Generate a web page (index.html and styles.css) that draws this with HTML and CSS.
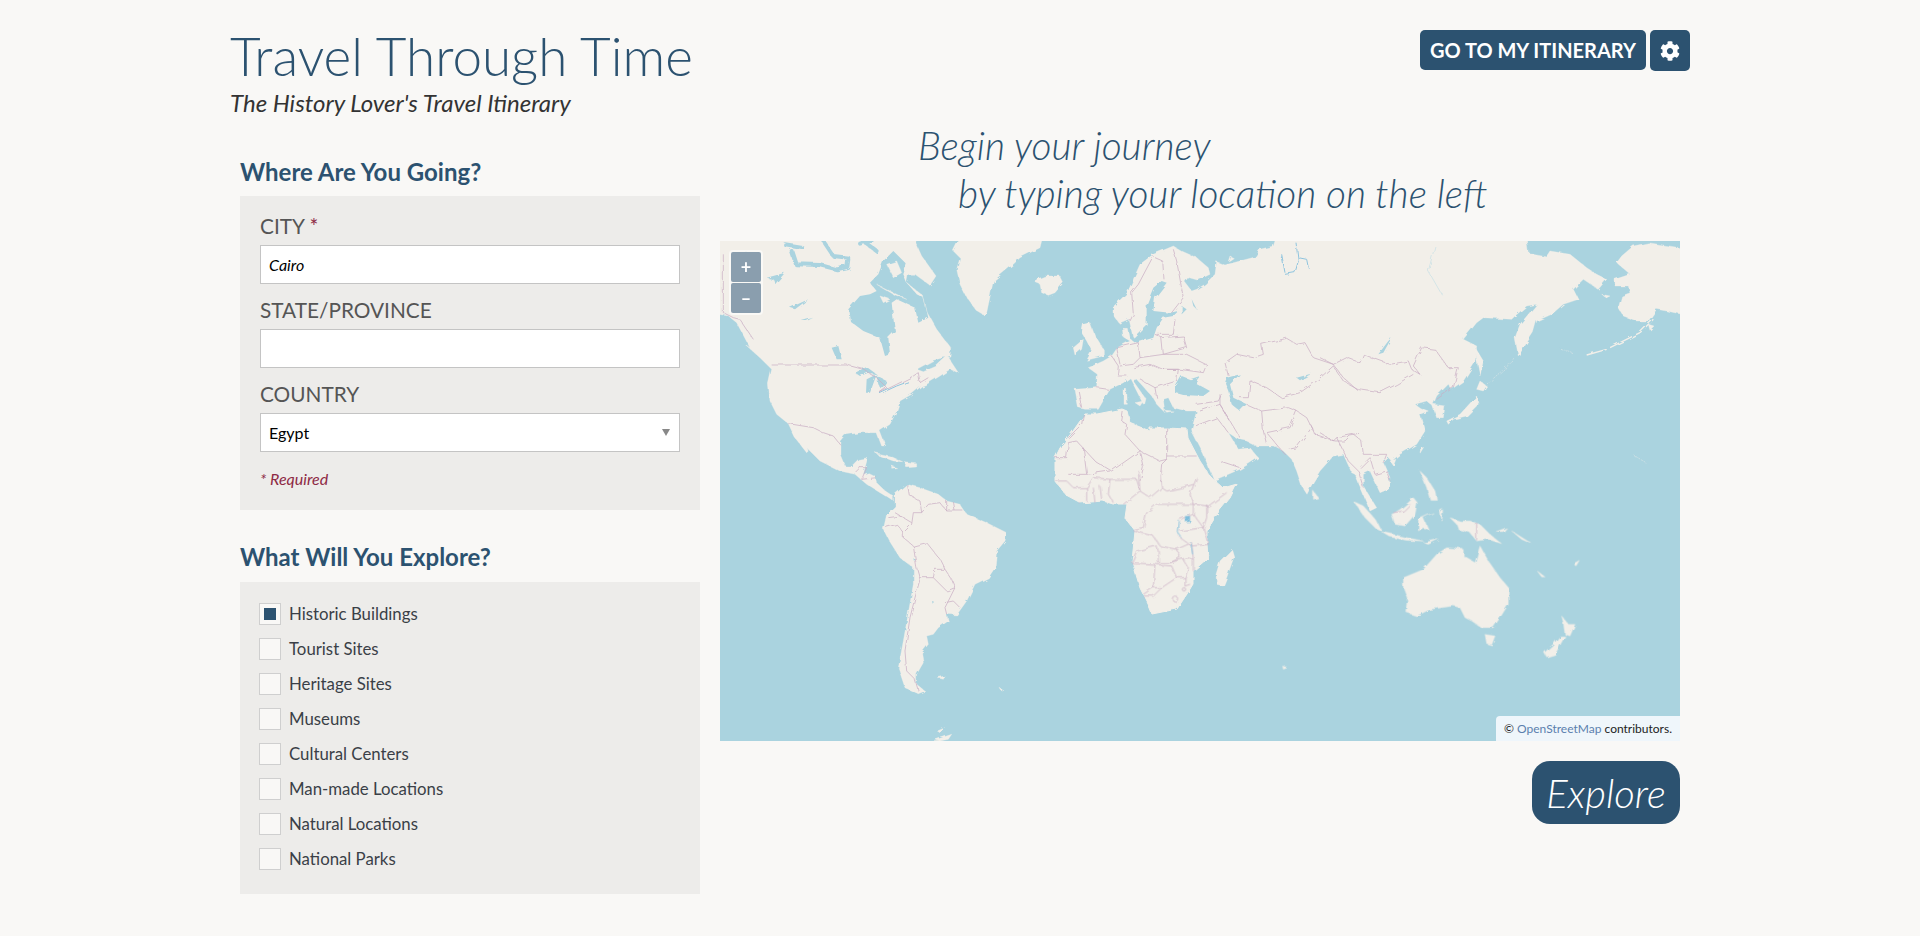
FILE: index.html
```html
<!DOCTYPE html>
<html lang="en">
<head>
  <meta charset="UTF-8" />
  <meta name="viewport" content="width=device-width, initial-scale=1.0"/>
  <title>Travel Through Time</title>
  <link rel="stylesheet" href="styles.css">
</head>
<body>
  <div class="page">
    <header class="top">
      <div>
        <h1 class="title">Travel Through Time</h1>
        <p class="tagline">The History Lover's Travel Itinerary</p>
      </div>
      <div class="top-buttons">
        <button class="btn">GO TO MY ITINERARY</button>
        <button class="btn btn-icon" aria-label="Settings">
          <svg viewBox="0 0 512 512" width="20" height="20"><path fill="#fff" d="M487.4 315.7l-42.6-24.6c4.3-23.2 4.3-47 0-70.2l42.6-24.6c4.9-2.8 7.1-8.6 5.5-14-11.1-35.6-30-67.8-54.7-94.6-3.8-4.1-10-5.1-14.8-2.3L380.8 110c-17.9-15.4-38.5-27.3-60.8-35.1V25.8c0-5.6-3.9-10.5-9.4-11.7-36.7-8.2-74.3-7.8-109.2 0-5.5 1.2-9.4 6.1-9.4 11.7V75c-22.2 7.9-42.8 19.8-60.8 35.1L88.7 85.5c-4.9-2.8-11-1.9-14.8 2.3-24.7 26.7-43.6 58.9-54.7 94.6-1.7 5.4.6 11.2 5.5 14L67.3 221c-4.3 23.2-4.3 47 0 70.2l-42.6 24.6c-4.9 2.8-7.1 8.6-5.5 14 11.1 35.6 30 67.8 54.7 94.6 3.8 4.1 10 5.1 14.8 2.3l42.6-24.6c17.9 15.4 38.5 27.3 60.8 35.1v49.2c0 5.6 3.9 10.5 9.4 11.7 36.7 8.2 74.3 7.8 109.2 0 5.5-1.2 9.4-6.1 9.4-11.7v-49.2c22.2-7.9 42.8-19.8 60.8-35.1l42.6 24.6c4.9 2.8 11 1.9 14.8-2.3 24.7-26.7 43.6-58.9 54.7-94.6 1.5-5.5-.7-11.3-5.6-14.1zM256 336c-44.1 0-80-35.9-80-80s35.9-80 80-80 80 35.9 80 80-35.9 80-80 80z"/></svg>
        </button>
      </div>
    </header>

    <div class="columns">
      <aside class="side">
        <h2 class="side-title">Where Are You Going?</h2>
        <form class="panel panel-place">
          <label class="field-label" for="city">CITY <span class="star">*</span></label>
          <input class="field" id="city" type="text" value="Cairo" />
          <label class="field-label" for="state">STATE/PROVINCE</label>
          <input class="field" id="state" type="text" />
          <label class="field-label" for="country">COUNTRY</label>
          <div class="select-wrap">
            <select class="field field-select" id="country">
              <option>Egypt</option>
            </select>
          </div>
          <p class="required">* Required</p>
        </form>

        <h2 class="side-title side-title-second">What Will You Explore?</h2>
        <div class="panel panel-checks">
          <label class="check"><input type="checkbox" checked /><span>Historic Buildings</span></label>
          <label class="check"><input type="checkbox" /><span>Tourist Sites</span></label>
          <label class="check"><input type="checkbox" /><span>Heritage Sites</span></label>
          <label class="check"><input type="checkbox" /><span>Museums</span></label>
          <label class="check"><input type="checkbox" /><span>Cultural Centers</span></label>
          <label class="check"><input type="checkbox" /><span>Man-made Locations</span></label>
          <label class="check"><input type="checkbox" /><span>Natural Locations</span></label>
          <label class="check"><input type="checkbox" /><span>National Parks</span></label>
        </div>
      </aside>

      <main class="main">
        <div class="headline">
          <div>Begin your journey</div>
          <div class="headline-second">by typing your location on the left</div>
        </div>

        <div class="map">
          <svg class="world" viewBox="0 0 960 500" width="960" height="500">
            <defs>
              <!-- roughens the coastlines so they don't read as straight segments -->
              <filter id="rough" x="-3%" y="-3%" width="106%" height="106%">
                <feTurbulence type="fractalNoise" baseFrequency="0.11" numOctaves="3" seed="4"/>
                <feDisplacementMap in="SourceGraphic" scale="4.5"/>
                <feGaussianBlur stdDeviation="0.3"/>
              </filter>
            </defs>
            <g filter="url(#rough)">
            <!-- americas, traced at 3x so each group has its own origin -->
            <g transform="scale(.33333)">
              <path class="land" d="M-30 -30L585 -30L585 0L605 45L648 105L630 133L585 100L565 100L560 125L610 165L622 215L650 265L692 320L690 345L640 358L590 385L610 392L650 375L682 345L715 395L690 385L660 405L620 430L605 435L575 460L540 480L530 510L510 550L480 570L497 615L485 615L470 575L420 575L375 582L360 600L360 640L375 675L395 675L415 655L443 650L430 700L445 695L465 705L470 725L490 745L520 765L520 780L505 770L480 755L440 730L405 700L360 690L300 660L240 600L225 565L265 630L260 635L225 590L205 548L170 520L150 480L145 430L155 385L120 350L75 310L90 320L50 245L25 225L-30 215Z"/>
              <path class="water" d="M385 205L420 165L450 160L470 150L450 125L475 100L490 60L520 30L560 70L550 100L560 125L590 160L610 170L625 230L595 245L585 200L530 175L515 185L520 230L525 270L505 290L510 340L495 345L480 290L430 270L390 240Z"/>
              <path class="channel" d="M195 10L245 18M215 30L228 70L300 72L350 85L382 78L385 55M310 0L340 45L385 50M430 0L470 30M460 -5L420 8"/>
              <path class="water" d="M35 35L85 35L60 55ZM140 110L195 95L165 130L160 115ZM210 200L265 175L225 205ZM335 320L355 315L365 355L350 355ZM245 240L280 230L260 240ZM405 395L440 378L470 400L445 395L420 405ZM440 415L470 400L450 455L438 455ZM470 405L500 420L485 445L475 430Z"/>
              <path class="lake-line" d="M480 458L530 435L570 420"/>
              <path class="land" d="M480 165L510 175L490 185ZM470 130L520 160L560 175L510 150ZM500 70L530 60L545 95L520 110Z"/>
              <path class="land" d="M735 -30L965 -30L965 0L960 20L900 50L880 70L820 120L800 215L790 222L770 210L740 170L720 130L710 85L720 50L700 30L710 10Z"/>
              <path class="land" d="M950 115L975 105L1020 105L1030 125L1005 155L985 163L965 155L960 130L948 125Z"/>
              <path class="land" d="M465 635L510 645L548 662L520 660L480 645ZM555 665L590 668L590 678L560 680ZM515 675L530 680L515 682Z"/>
              <path class="border" d="M155 372L380 372L430 385L470 410L500 440L480 455L530 430L580 405L595 395L600 425L625 410M205 548L280 560L310 575L340 585L360 610M405 695L420 680L440 680L425 715L470 710M10 40L10 215L40 230L60 235L100 295M1005 650L1035 650L1040 605L1075 600L1090 615L1165 665L1200 655M1090 615L1095 700L1040 705L1010 715M1040 705L1045 725L1100 745L1140 705L1200 700M1130 525L1125 555L1075 590L1045 605M1100 745L1080 790M1145 740L1140 780M1040 745L1075 760"/>
            </g>
            <g transform="translate(140 230) scale(.33333)">
              <path class="land" d="M140 40L180 50L235 70L260 90L300 100L320 130L380 155L440 185L435 210L410 240L405 290L385 320L345 340L320 390L290 432L260 430L265 450L235 470L220 490L200 495L205 520L185 545L190 575L170 610L170 640L195 660L175 668L135 650L115 590L130 510L160 340L160 290L120 260L85 205L70 175L80 130L105 105L105 70Z"/>
              <path class="land" d="M1115 235L1122 258L1100 320L1090 345L1070 340L1068 310L1080 270ZM232 620L255 615L250 625ZM420 652L432 660L425 660ZM232 780L255 770L240 785ZM222 808L275 790L265 805L240 810Z"/>
              <path class="border" d="M140 40L145 70L180 90L185 125L160 125L155 160L130 185L130 200L160 225L200 215L240 265L255 295L225 295L220 320L180 320M105 125L155 155M85 140L120 135M75 170L110 160L130 185M185 125L205 100L240 95L260 120L310 120M260 90L260 120M280 90L285 120M160 225L170 290L180 325L165 380L150 440L135 540L140 600L165 625L175 660M220 320L260 360L285 350L275 325L255 295M285 350L265 390L255 410L260 430M255 395L280 390L300 410"/>
              <path class="water" d="M160 262L166 265L162 270ZM216 390L222 392L218 398Z"/>
            </g>

            <!-- africa in map pixels -->
            <path class="land" d="M365 173L353 190L340 207L335 217L335 240L347 255L360 262L383 260L393 263L407 263L405 277L415 290L412 320L420 347L428 363L432 373L457 368L467 353L473 343L473 330L488 317L487 303L487 290L497 273L510 257L517 243L503 247L490 235L480 220L468 197L467 188L447 187L430 187L430 190L410 182L407 170L402 168L377 173Z"/>

            <!-- eurasia, traced at 3x from x=320 -->
            <g transform="translate(320 0) scale(.33333)">
              <path class="land" d="M105 445L170 440L172 400L145 380L190 360L215 345L232 320L270 300L250 288L247 262L262 262L268 292L284 304L290 300L278 285L268 238L240 250L222 225L222 195L262 155L300 70L340 40L400 15L425 30L470 50L505 80L510 100L475 118L440 108L432 120L455 150L470 145L495 130L525 100L530 62L555 72L600 60L645 48L660 25L700 15L715 -30L1460 -30L1460 0L1465 35L1520 45L1530 30L1590 40L1640 80L1670 100L1700 115L1675 145L1630 115L1600 145L1615 175L1570 190L1535 220L1490 240L1480 275L1435 345L1425 290L1440 250L1490 190L1460 195L1425 225L1415 235L1330 230L1310 245L1270 295L1310 315L1305 365L1270 420L1235 445L1225 430L1190 465L1180 490L1215 495L1210 530L1190 530L1178 495L1160 480L1125 490L1140 500L1165 510L1140 520L1155 570L1130 610L1080 640L1055 660L1045 650L1030 665L1050 710L1045 745L1020 755L990 690L970 700L970 735L1010 800L990 810L945 700L935 695L910 640L880 645L840 690L820 722L801 760L785 735L770 690L755 655L730 630L700 615L650 615L620 600L595 595L565 575L595 625L630 620L655 650L625 670L600 685L530 715L522 718L490 640L457 575L455 565L470 510L440 510L400 500L385 470L370 475L375 515L350 490L335 465L290 415L278 418L315 470L310 490L285 440L270 410L250 425L210 445L195 470L175 505L135 505L115 500Z"/>
              <path class="water" d="M405 440L425 405L450 415L480 405L465 425L510 450L490 465L430 462L405 455ZM560 410L600 400L570 430L580 470L620 490L600 510L575 490L565 450L555 425ZM365 120L380 125L345 170L340 210L390 215L415 210L400 225L370 230L350 260L340 290L290 305L280 290L320 250L320 190L340 140ZM425 195L440 205L425 220ZM455 175L470 205L460 195ZM770 410L815 398L780 418ZM1055 290L1030 335L1015 340L1045 300ZM590 590L630 612L610 622L585 600Z"/>
              <path class="lake-line" d="M725 40L735 95M735 100L765 95L775 60L768 5M775 50L800 55L805 80"/>
              <path class="land" d="M130 250L150 245L165 285L190 325L190 345L140 358L155 330L140 300L125 275ZM100 320L130 295L125 325L105 342ZM252 445L260 445L262 490L252 490ZM285 485L310 480L300 495ZM375 508L400 510L380 514ZM1300 310L1330 360L1320 405L1315 380ZM1320 420L1340 435L1330 450L1310 445ZM1310 465L1315 490L1280 525L1240 535L1225 550L1220 540L1260 520ZM1145 620L1155 620L1143 640ZM1050 660L1068 655L1060 675ZM570 45L580 50L565 60Z"/>
              <path class="border" d="M340 45L295 130L275 155L280 220L270 240M345 50L368 60L372 115M400 25L410 60L430 170L395 215M405 235L400 280M350 280L400 280M295 305L300 350L370 340L365 290L345 280M370 340L440 340L500 370L490 395L420 385L370 385M365 290L430 285L440 320L370 340M215 345L235 375L232 405L262 405M230 320L240 370M232 320L295 305M300 350L280 370L240 375M170 440L205 445M115 450L125 500M280 380L330 370L365 385L415 385L410 420L345 440L350 470M300 415L345 440M555 365L590 340L640 350L670 340L665 310L740 292L770 310L795 305L820 350L880 370M555 365L565 405M600 470L625 470L630 420L680 440L710 460L725 470L780 455L830 420L880 375L910 420L955 445M540 460L540 490L570 540L600 590M620 490L665 510L670 570L680 610M665 510L745 500L770 510L750 560L680 575M680 575L735 640M770 510L800 530L815 560L770 620L745 625M470 490L535 480L545 460M480 510L540 490L570 540M465 555L530 530L565 575M540 660L600 680M810 550L825 580L885 600L915 600L930 585L960 580"/>
              <path class="border" d="M45 650L80 650L85 605L110 600L165 660L215 690L300 630L360 660L380 655L380 560M130 520L125 550L85 590M380 645L470 645M260 550L255 580L300 630M250 510L245 540L260 550M300 635L310 680L300 720M380 655L365 670L360 720M85 700L140 700L130 620M140 700L210 690"/>
            </g>

            <!-- far side of asia and alaska -->
            <g transform="translate(600 0) scale(.33333)">
              <path class="land" d="M940 15L985 5L1080 20L1110 20L1110 225L1040 210L1010 205L985 240L950 240L910 225L895 200L905 165L930 155L925 135L885 135L885 115L930 100L890 65L905 45ZM845 160L870 165L860 170ZM985 250L1002 255L990 268Z"/>
              <path class="land-line" d="M1000 235L960 275L870 320M860 325L800 342"/>
              <path class="land-thin" d="M500 430L585 355M720 322L760 338M940 642L978 665"/>
              <path class="border" d="M0 350L40 370L80 350L120 365L130 340L155 350L210 370L265 360L275 385L300 400L280 375L305 320L345 325L385 380L415 380L400 440L385 450L350 475M40 370L70 410L110 445L180 455L230 430L280 400M0 575L40 600L50 590L100 580L125 600L130 640L160 640L200 640L190 665M50 590L85 660L115 690L130 740M150 650L165 700L200 690L210 720M120 680L150 650"/>
              <path class="river" d="M345 15L325 90L365 160"/>
            </g>

            <!-- africa borders -->
            <g transform="translate(140 230) scale(.33333)">
              <path class="border" d="M585 30L620 30L640 50L680 50L700 20L750 25L830 25L840 60L790 100M750 25L745 70L760 95M680 50L680 90M700 50L705 95M720 45L725 85M835 0L840 60L870 80L905 50L900 10L905 0M905 50L920 60L985 45L1000 40M1010 20L990 70L1000 100L960 100L890 100L860 125L850 170L820 175M1000 100L1045 105L1100 65M1000 100L1000 130L1030 170L1040 140L1040 100M960 145L1000 130M820 180L880 195L900 225L950 235L960 260L930 275L895 275L895 240L890 225L830 240L815 275L885 280L880 350L850 370M885 280L935 285L950 320L905 350L880 350M950 235L995 215L1000 265L980 260L930 275M960 180L1030 170L1045 220L995 225L960 200M970 265L985 290L975 320L950 320M1000 265L1000 300M975 320L975 345L990 340M850 375L880 375L905 350"/>
              <circle class="border" cx="945" cy="383" r="8"/>
              <circle class="border" cx="972" cy="355" r="5"/>
              <path class="lake" d="M975 135h15v18h-15z"/>
              <path class="lake-line" d="M992 215L998 250M958 150L955 185L965 200"/>
            </g>

            <!-- oceania and the islands south of asia -->
            <g transform="translate(560 230) scale(.33333)">
              <path class="land" d="M370 320L430 295L470 250L500 230L550 235L550 255L585 275L600 225L625 270L660 320L685 350L685 400L660 440L640 470L605 470L575 450L555 440L540 410L520 405L450 415L410 435L380 425L385 390L370 350Z"/>
              <path class="land" d="M615 490L645 495L635 522L620 518ZM845 435L865 460L885 460L870 495L855 490L850 455ZM840 495L855 495L825 550L800 558L793 545L820 520ZM510 140L540 150L570 150L600 160L630 190L665 218L625 205L590 210L570 185L535 175L530 160ZM222 92L250 105L290 150L305 180L285 170L255 140ZM305 183L340 190L380 200L430 210L380 208L330 198ZM335 130L360 115L385 95L400 80L412 95L405 130L375 165L345 160ZM415 145L460 125L430 140L445 175L430 170L415 180ZM420 0L440 20L465 60L470 85L450 85L440 50ZM100 60L115 80L100 85ZM430 215L475 205L445 220ZM648 182L680 170L670 182ZM772 300L795 318L785 318ZM880 278L898 268L888 285ZM8 585L22 590L10 595ZM480 120L488 115L486 150ZM695 180L755 218L725 205Z"/>
              <path class="border" d="M590 155L590 208M340 125L370 120L390 100"/>
            </g>
            </g>
          </svg>

          <div class="zoom-box">
            <button class="zoom-btn">+</button>
            <button class="zoom-btn">&#8211;</button>
          </div>
          <div class="credit">&copy; <a class="credit-link" href="#">OpenStreetMap</a> contributors.</div>
        </div>

        <div class="action">
          <button class="explore">Explore</button>
        </div>
      </main>
    </div>
  </div>
</body>
</html>
```

FILE: styles.css
```css
* {
  box-sizing: border-box;
}

body {
  margin: 0;
  background-color: #f9f8f6;
  font-family: 'Lato', sans-serif;
  color: #333;
}

.page {
  width: 1460px;
  margin: 0 auto;
}

.top {
  display: flex;
  justify-content: space-between;
  align-items: flex-start;
  height: 122px;
  padding-top: 30px;
}

.title {
  margin: 0;
  font-size: 53px;
  font-weight: 300;
  line-height: 52px;
  color: #2c5270;
}

.tagline {
  margin: 6px 0 0;
  font-size: 24px;
  font-style: italic;
  font-weight: 400;
  line-height: 30px;
  color: #333;
}

.top-buttons {
  display: flex;
  gap: 4px;
}

.btn {
  height: 40px;
  padding: 0 10px;
  border: none;
  border-radius: 5px;
  background-color: #2c5270;
  color: #fff;
  font-family: 'Lato', sans-serif;
  font-size: 20px;
  font-weight: 700;
}

.btn-icon {
  display: flex;
  align-items: center;
  justify-content: center;
  width: 40px;
  height: 41px;
  padding: 0;
}

.columns {
  display: flex;
  gap: 20px;
  padding: 0 10px;
}

.side {
  width: 460px;
  padding-top: 26px;
}

.side-title {
  margin: 0;
  height: 48px;
  font-size: 24px;
  font-weight: 700;
  line-height: 48px;
  color: #2c5270;
}

.side-title-second {
  margin-top: 22px;
  height: 50px;
  line-height: 50px;
}

.panel {
  background-color: #edecea;
  padding: 0 20px;
}

.panel-place {
  height: 314px;
  padding-top: 16px;
}

.panel-checks {
  height: 312px;
  padding-top: 14px;
}

.field-label {
  display: block;
  height: 33px;
  font-size: 20.8px;
  line-height: 28px;
  color: #555;
}

.star {
  color: #8e2a45;
}

.field {
  display: block;
  width: 100%;
  height: 39px;
  margin-bottom: 12px;
  padding: 0 8px;
  border: 1px solid #c4c4c4;
  border-radius: 0;
  background: #fff;
  color: #000;
  font-family: 'Lato', sans-serif;
  font-size: 16px;
  font-style: italic;
}

.select-wrap {
  position: relative;
}

.select-wrap::after {
  content: "";
  position: absolute;
  right: 10px;
  top: 16px;
  border-left: 4px solid transparent;
  border-right: 4px solid transparent;
  border-top: 7px solid #888;
}

.field-select {
  appearance: none;
  font-style: normal;
}

.required {
  margin: 17px 0 0;
  font-size: 16px;
  font-style: italic;
  color: #8e2a45;
}

.check {
  display: flex;
  align-items: center;
  height: 35px;
  font-size: 16.8px;
  color: #3a3f47;
}

.check input {
  appearance: none;
  width: 22px;
  height: 22px;
  margin: 0 8px 0 -1px;
  border: 1px solid #cfcfcf;
  background-color: #f9f8f6;
}

.check input:checked {
  background: linear-gradient(#2c5270, #2c5270) center / 12px 12px no-repeat #f9f8f6;
}

.main {
  width: 960px;
}

.headline {
  height: 119px;
  padding-left: 198px;
  font-size: 38.9px;
  font-style: italic;
  font-weight: 300;
  line-height: 48px;
  color: #2c5270;
}

.headline > div {
  position: relative;
  top: -1px;
}

.headline-second {
  padding-left: 40px;
}

.map {
  position: relative;
  height: 500px;
  overflow: hidden;
  background-color: #aad3df;
}

.world {
  display: block;
}

.land {
  fill: #f2efe9;
  stroke: #f2efe9;
  stroke-width: 1;
  stroke-linejoin: round;
}

.land-line {
  fill: none;
  stroke: #f2efe9;
  stroke-width: 4;
}

.land-thin {
  fill: none;
  stroke: #e4ebe9;
  stroke-width: 1.6;
  stroke-dasharray: 6 3;
}

.water {
  fill: #aad3df;
}

.channel {
  fill: none;
  stroke: #aad3df;
  stroke-width: 12;
  stroke-linecap: round;
  stroke-linejoin: round;
}

.lake {
  fill: #7fbfdc;
}

.lake-line {
  fill: none;
  stroke: #8fc4de;
  stroke-width: 3;
}

.river {
  fill: none;
  stroke: #c6e0e6;
  stroke-width: 2;
}

.border {
  fill: none;
  stroke: #c9aec4;
  stroke-width: 2.2;
  stroke-linejoin: round;
}

.zoom-box {
  position: absolute;
  left: 9px;
  top: 9px;
  display: flex;
  flex-direction: column;
  gap: 1px;
  padding: 2px;
  border-radius: 4px;
  background: rgba(255, 255, 255, 0.6);
}

.zoom-btn {
  width: 30px;
  height: 30px;
  padding: 0;
  border: none;
  border-radius: 2px;
  background-color: #8a9eae;
  color: #fff;
  font-family: 'Lato', sans-serif;
  font-size: 18px;
  font-weight: 700;
}

.credit {
  position: absolute;
  right: 0;
  bottom: 0;
  width: 184px;
  height: 25px;
  padding: 5px 8px;
  border-radius: 4px 0 0 0;
  background-color: #eff6fb;
  font-size: 12px;
  line-height: 15px;
  color: #222;
  white-space: nowrap;
}

.credit-link {
  color: #5b7fae;
  text-decoration: none;
}

.action {
  display: flex;
  justify-content: flex-end;
  padding-top: 20px;
}

.explore {
  width: 148px;
  height: 63px;
  padding: 0;
  border: none;
  border-radius: 18px;
  background-color: #2c5270;
  color: #fff;
  font-family: 'Lato', sans-serif;
  font-size: 40px;
  font-style: italic;
  font-weight: 300;
}
```
